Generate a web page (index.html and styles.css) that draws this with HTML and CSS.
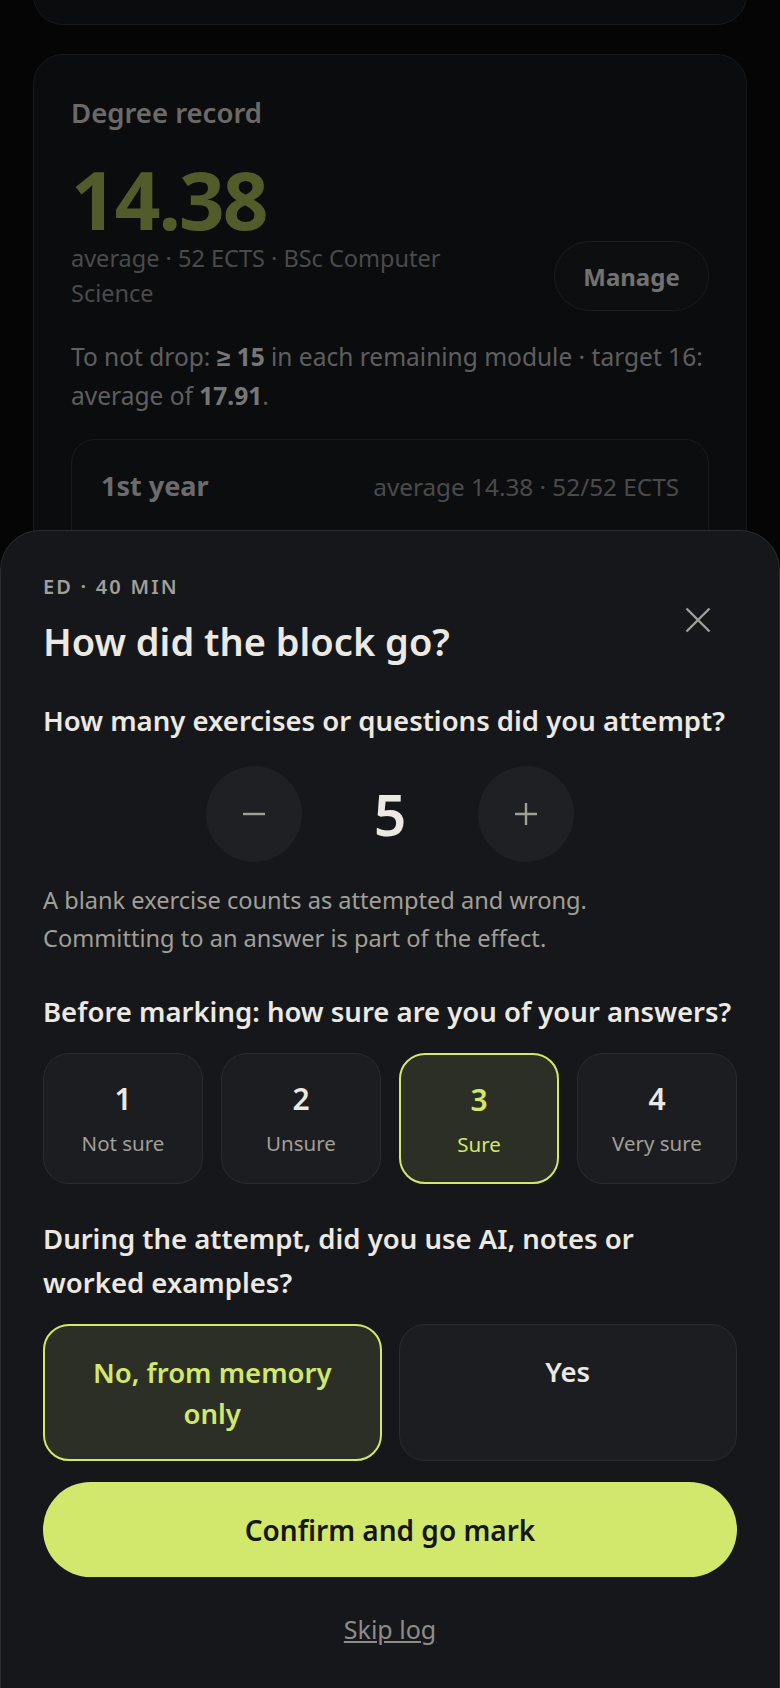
FILE: index.html
```html
<!DOCTYPE html>
<html lang="en">
<head>
    <meta charset="utf-8">
    <title>Log block</title>
    <link rel="stylesheet" href="styles.css">
</head>
<body>
<div id="page">
    <div class="card card-prev"></div>
    <div class="card">
        <h2 class="card-title">Degree record</h2>
        <div class="big-avg">14.38</div>
        <div class="avg-row">
            <div class="avg-meta">average · 52 ECTS · BSc Computer Science</div>
            <a class="btn-ghost" href="#">Manage</a>
        </div>
        <p class="hint">To not drop: <b>≥ 15</b> in each remaining module · target 16: average of <b>17.91</b>.</p>
        <div class="year">
            <div class="year-head">
                <span class="year-name">1st year</span>
                <span class="year-meta">average 14.38 · 52/52 ECTS</span>
            </div>
        </div>
    </div>
</div>

<div id="backdrop"></div>

<div id="sheet">
    <button class="close" aria-label="Close">
        <svg viewBox="0 0 26 26" width="26" height="26"><path d="M1.5 1.5 L24.5 24.5 M24.5 1.5 L1.5 24.5"/></svg>
    </button>
    <div class="eyebrow">ED · 40 MIN</div>
    <h1 class="sheet-title">How did the block go?</h1>

    <div class="question">How many exercises or questions did you attempt?</div>
    <div class="stepper">
        <button class="step" aria-label="Less">
            <svg viewBox="0 0 22 22" width="22" height="22"><path d="M0 11 H22"/></svg>
        </button>
        <div class="count">5</div>
        <button class="step" aria-label="More">
            <svg viewBox="0 0 22 22" width="22" height="22"><path d="M0 11 H22 M11 0 V22"/></svg>
        </button>
    </div>
    <p class="note">A blank exercise counts as attempted and wrong.<br>Committing to an answer is part of the effect.</p>

    <div class="question">Before marking: how sure are you of your answers?</div>
    <div class="choices four">
        <button class="choice"><span class="num">1</span><span class="lbl">Not sure</span></button>
        <button class="choice"><span class="num">2</span><span class="lbl">Unsure</span></button>
        <button class="choice selected"><span class="num">3</span><span class="lbl">Sure</span></button>
        <button class="choice"><span class="num">4</span><span class="lbl">Very sure</span></button>
    </div>

    <div class="question">During the attempt, did you use AI, notes or worked examples?</div>
    <div class="choices two">
        <button class="choice opt selected">No, from memory only</button>
        <button class="choice opt">Yes</button>
    </div>

    <button class="confirm">Confirm and go mark</button>
    <a class="skip" href="#">Skip log</a>
</div>
</body>
</html>
```

FILE: styles.css
```css
html, body {
    margin: 0;
    padding: 0;
}

body {
    height: 1688px;
    overflow: hidden;
    background: #0b0b0b;
    font-family: "Noto Sans", "Segoe UI", sans-serif;
    color: #ece9e2;
}

#page {
    padding: 0 33px;
    display: flex;
    flex-direction: column;
    gap: 29px;
}

.card {
    background: #16181c;
    border: 1px solid #303237;
    border-radius: 30px;
    padding: 41px 37px;
}

.card-prev {
    height: 59px;
    margin-top: -36px;
    padding: 0;
}

.card-title {
    margin: 0;
    font-size: 27.5px;
    font-weight: 600;
    line-height: 34px;
    color: #d6d5d1;
}

.big-avg {
    margin-top: 28px;
    font-size: 80px;
    font-weight: 700;
    line-height: 82px;
    letter-spacing: -2px;
    color: #a2b855;
}

.avg-row {
    display: flex;
    align-items: center;
    gap: 40px;
    margin-top: 1px;
}

.avg-meta {
    flex: 1;
    font-size: 23.5px;
    line-height: 35px;
    color: #959595;
}

.btn-ghost {
    box-sizing: border-box;
    width: 155px;
    height: 70px;
    display: flex;
    align-items: center;
    justify-content: center;
    border: 1.5px solid #36383d;
    border-radius: 35px;
    background: #1b1c20;
    font-size: 24px;
    font-weight: 700;
    color: #e4e4e4;
    text-decoration: none;
}

.hint {
    margin: 26px 0 0;
    font-size: 24.5px;
    line-height: 39px;
    color: #bdbdbd;
}

.hint b {
    color: #eeeeee;
}

.year {
    margin-top: 24px;
    height: 300px;
    background: #191b1f;
    border: 1px solid #33353a;
    border-radius: 24px;
    padding: 29px 29px;
}

.year-head {
    display: flex;
    justify-content: space-between;
    align-items: baseline;
}

.year-name {
    font-size: 27px;
    font-weight: 700;
    line-height: 34px;
    color: #d6d6d6;
}

.year-meta {
    font-size: 24.3px;
    color: #949494;
}

#backdrop {
    position: fixed;
    top: 0;
    left: 0;
    right: 0;
    bottom: 0;
    background: rgba(0, 0, 0, 0.5);
}

#sheet {
    position: fixed;
    top: 530px;
    left: 0;
    right: 0;
    bottom: -2px;
    background: #16171b;
    border: 1px solid #2b2c31;
    border-radius: 40px 40px 0 0;
    padding: 42px 42px 0;
}

#sheet button {
    font-family: inherit;
    cursor: pointer;
}

.close {
    position: absolute;
    top: 65px;
    right: 57px;
    width: 48px;
    height: 48px;
    padding: 0;
    border: none;
    background: none;
    display: flex;
    align-items: center;
    justify-content: center;
}

.close path,
.step path {
    stroke: #a09f98;
    stroke-width: 2.4;
    fill: none;
}

.eyebrow {
    font-size: 20px;
    font-weight: 600;
    line-height: 28px;
    letter-spacing: 2.2px;
    color: #a09f98;
}

.sheet-title {
    margin: 16px 0 0;
    font-size: 38px;
    font-weight: 600;
    line-height: 48px;
}

.question {
    margin: 33px 0 19px;
    font-size: 27.5px;
    font-weight: 600;
    line-height: 44px;
}

.sheet-title + .question {
    margin-top: 34px;
}

.stepper {
    display: flex;
    justify-content: center;
    align-items: center;
    gap: 40px;
    margin-top: 23px;
}

.step {
    width: 96px;
    height: 96px;
    border-radius: 50%;
    border: none;
    background: #1f2024;
    display: flex;
    align-items: center;
    justify-content: center;
}

.count {
    min-width: 96px;
    text-align: center;
    font-size: 57px;
    font-weight: 600;
    line-height: 1;
}

.note {
    margin: 19px 0 0;
    font-size: 23.6px;
    line-height: 38px;
    color: #a09f98;
}

.choices {
    display: grid;
}

.choices.four {
    grid-template-columns: repeat(4, 1fr);
    gap: 18px;
}

.choices.two {
    grid-template-columns: 1fr 1fr;
    gap: 17px;
}

.choice {
    display: flex;
    flex-direction: column;
    align-items: center;
    background: #1c1d21;
    border: 1.5px solid #2a2b30;
    border-radius: 26px;
    padding: 27px 8px 24px;
    color: #ece9e2;
}

.choice .num {
    font-size: 30px;
    font-weight: 600;
    line-height: 36px;
}

.choice .lbl {
    margin-top: 12px;
    font-size: 20.5px;
    line-height: 28px;
    color: #a09f98;
}

.choice.opt {
    padding: 26px 22px 25px;
    font-size: 27.5px;
    font-weight: 600;
    line-height: 41px;
    text-align: center;
}

.choice.selected {
    background: #2c2f25;
    border: 2px solid #d2e86c;
    color: #d2e86c;
}

.choice.selected .lbl {
    color: #d2e86c;
}

.confirm {
    display: block;
    width: 100%;
    height: 95px;
    margin-top: 21px;
    border: none;
    border-radius: 48px;
    background: #d2e86c;
    font-size: 28px;
    font-weight: 600;
    color: #15160f;
}

.skip {
    display: block;
    margin-top: 36px;
    text-align: center;
    font-size: 25px;
    line-height: 33px;
    color: #8d8c86;
}
```
